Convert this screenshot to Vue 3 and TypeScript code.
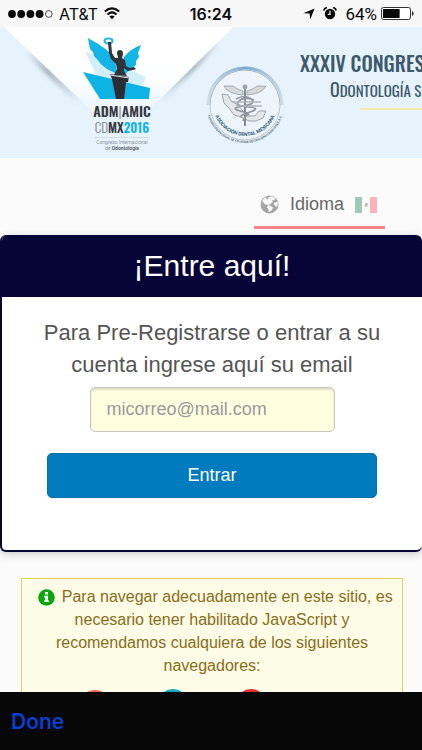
<script setup lang="ts">
import { ref } from 'vue'

const carrier = 'AT&T'
const time = '16:24'
const battery = 64
const signal = [true, true, true, true, false]
const email = ref('')
</script>

<template>
  <div class="screen">
    <header class="status">
      <div class="status-left">
        <svg width="45" height="10" viewBox="0 0 45 10" aria-hidden="true">
          <circle
            v-for="(on, i) in signal"
            :key="i"
            :cx="4 + i * 9.2"
            cy="5"
            :r="on ? 3.9 : 3.4"
            :fill="on ? '#0a0a0a' : 'none'"
            :stroke="on ? 'none' : '#222'"
            stroke-width=".8"
          />
        </svg>
        <span>{{ carrier }}</span>
        <svg width="16" height="13" viewBox="0 0 16 13" fill="none" stroke="#0a0a0a" stroke-width="2" aria-hidden="true">
          <path d="M.8 4.6Q8-1.8 15.2 4.6" />
          <path d="M3.5 7.4Q8 3.4 12.5 7.4" />
          <path d="M8 12.2 5.4 9.5Q8 7.3 10.6 9.5Z" fill="#0a0a0a" stroke="none" />
        </svg>
      </div>
      <strong class="time">{{ time }}</strong>
      <div class="status-right">
        <svg width="12" height="12" viewBox="0 0 12 12" aria-hidden="true">
          <path d="M11.6.4 7.2 11.4 6.6 5.6.4 5.2Z" fill="#0a0a0a" />
        </svg>
        <svg class="alarm" width="14" height="13" viewBox="0 0 14 13" aria-hidden="true">
          <circle cx="7" cy="7" r="5.2" fill="#0a0a0a" />
          <path d="M.9 3.6Q1.2 1 4 .8M13.1 3.6Q12.8 1 10 .8" fill="none" stroke="#0a0a0a" stroke-width="1.6" />
          <path d="M7 3.8V7.4H4.8" fill="none" stroke="#fff" stroke-width="1.1" />
        </svg>
        <span class="percent">{{ battery }}%</span>
        <svg width="33" height="13" viewBox="0 0 33 13" aria-hidden="true">
          <rect x=".5" y=".5" width="29" height="12" rx="2" fill="#fff" stroke="#333" />
          <rect x="2" y="2" :width="26 * battery / 100" height="9" rx=".5" fill="#080808" />
          <path d="M31 4Q32.6 4.6 32.6 6.5T31 9Z" fill="#222" />
        </svg>
      </div>
    </header>

    <main class="page">
      <section class="banner">
        <svg class="fold" width="240" height="131" viewBox="0 0 240 131" aria-hidden="true">
          <defs>
            <linearGradient id="paper" x1="0" y1="0" x2="0" y2="1">
              <stop offset="0" stop-color="#fff" />
              <stop offset=".55" stop-color="#fdfeff" />
              <stop offset="1" stop-color="#e7f3fc" />
            </linearGradient>
            <linearGradient id="shadeLeft" gradientUnits="userSpaceOnUse" x1="26" y1="24" x2="80" y2="76">
              <stop offset="0" stop-color="#70808a" stop-opacity="0" />
              <stop offset=".4" stop-color="#70808a" stop-opacity=".65" />
              <stop offset="1" stop-color="#70808a" stop-opacity="0" />
            </linearGradient>
            <linearGradient id="shadeRight" gradientUnits="userSpaceOnUse" x1="220" y1="13" x2="160" y2="73">
              <stop offset="0" stop-color="#70808a" stop-opacity="0" />
              <stop offset=".45" stop-color="#70808a" stop-opacity=".6" />
              <stop offset="1" stop-color="#70808a" stop-opacity="0" />
            </linearGradient>
            <filter id="soften" x="-20%" y="-20%" width="140%" height="140%">
              <feGaussianBlur stdDeviation="2" />
            </filter>
          </defs>
          <path d="M14 12 80 76" stroke="url(#shadeLeft)" stroke-width="5" filter="url(#soften)" />
          <path d="M224 10 158 76" stroke="url(#shadeRight)" stroke-width="5" filter="url(#soften)" />
          <path d="M4 0H233L158 74Q119 112 82 74Z" fill="url(#paper)" />
        </svg>

        <div class="event">
          <svg width="70" height="64" viewBox="0 0 70 64" aria-hidden="true">
            <path d="M2 15 63 41 59 49 14 41Z" fill="#d3eefa" />
            <path d="M5 2Q16 8 24 14L30 21Q33 26 34 38L24 33 20 30 17 27 14 23 11 20 10 16 7 13 6 8Z" fill="#12b5e5" />
            <path d="M58 9Q47 13 41 21L40 31 42 38 48 33 53 29 53 25 56 21 55 17Z" fill="#12b5e5" />
            <path d="M0 36 67 52 66 63H17Z" fill="#0db3e5" />
            <ellipse cx="25.5" cy="5" rx="4" ry="2.4" fill="none" stroke="#25b9e2" stroke-width="2" />
            <path d="M25 6 28 6 29 17 32 22 35 22 34 17Q34 14 37 14 40 14 40 18L39 22 42 24 43 30 47 32 51 31 53 33 50 34 45 35 41 32 41 35 44 40 31 39 34 33 33 28 28 23 26 17Z" fill="#30343a" />
            <path d="M27 38 46 41 45 46 43 46 41 63H33L29 43Z" fill="#2b2d33" />
            <path d="M27 39 46 42" stroke="#d9e0e3" stroke-width="1.2" />
          </svg>
          <div class="event-text">
            <p class="event-name">ADM<span class="thin">|</span>AMIC</p>
            <p class="event-year"><span class="thin">CD</span>MX<span class="cyan">2016</span></p>
            <p class="event-note">Congreso Internacional<br />de <b>Odontología</b></p>
          </div>
        </div>

        <svg class="seal" width="80" height="80" viewBox="0 0 80 80" role="img" aria-label="Asociación Dental Mexicana">
          <defs>
            <linearGradient id="rim" x1="0" y1="0" x2="1" y2="0">
              <stop offset="0" stop-color="#cfdde6" />
              <stop offset=".5" stop-color="#7ba9cf" />
              <stop offset="1" stop-color="#ccdbe4" />
            </linearGradient>
            <path id="innerArc" d="M8 39A32 32 0 0 0 72 39" />
            <path id="outerArc" d="M1 39A39 39 0 0 0 79 39" />
          </defs>
          <circle cx="40" cy="40" r="34" fill="#eef5fa" />
          <path d="M3 40A37 37 0 0 1 77 40" fill="none" stroke="url(#rim)" stroke-width="3" />
          <path d="M5 40A35 35 0 0 1 75 40" fill="none" stroke="#93a7b5" stroke-width=".8" />
          <path d="M5 40A35 35 0 0 0 75 40" fill="none" stroke="#b3bec6" stroke-width=".8" />
          <path d="M17 29 23 30 26 36 33 40 37 45 43 51 50 51 54 46 61 46 58 53 51 56 44 56 36 52 29 50 24 43 19 38Z" fill="#e3e7ea" stroke="#9ca4ab" stroke-width="1" />
          <path d="M38 26Q31 24 28 21L19 21Q23 29 38 30ZM42 26Q49 24 52 21L61 21Q57 29 42 30Z" fill="#d5d9dc" stroke="#969ea5" stroke-width=".8" />
          <path d="M40 21V61" stroke="#838a91" stroke-width="2" />
          <circle cx="40" cy="22" r="2.4" fill="#9da3a9" />
          <path d="M31 34Q40 29 46 34T38 41 35 46 43 50 38 56M49 35Q39 31 34 36T43 42 45 47 37 52" fill="none" stroke="#90979e" stroke-width="1.7" />
          <path d="M27 37H56M31 41H57" stroke="#b0b6ba" stroke-width="1.5" />
          <text class="seal-inner"><textPath href="#innerArc" startOffset="50%" text-anchor="middle">ASOCIACIÓN DENTAL MEXICANA</textPath></text>
          <text class="seal-outer"><textPath href="#outerArc" startOffset="50%" text-anchor="middle">FEDERACIÓN NACIONAL DE COLEGIOS DE CIRUJANOS DENTISTAS, A.C.</textPath></text>
        </svg>

        <div class="congress">
          <h1>XXXIV CONGRESO</h1>
          <p>O<small>DONTOLOGÍA SIN</small></p>
          <hr />
        </div>
      </section>

      <nav class="language-row">
        <a class="language" href="#idioma">
          <svg width="19" height="19" viewBox="0 0 19 19" aria-hidden="true">
            <circle cx="9.5" cy="9.5" r="9" fill="#a5a5a5" />
            <path d="M9 2 12 1.4 15.5 3.6 14 5.2 12.2 5 12.8 7 11 8.6 9.2 9.4 9.6 11 8 10.6 6.8 9.6 5 9.4 3 7 2.4 5.6 4.2 3.2 6.2 2.6 6.8 4.4 8.2 4Z" fill="#f8f8f8" />
            <path d="M7.8 10.8 10.6 10.8 13 12.6 12 15 9.8 16.8 8.8 16.8 8.2 13.8 6.8 12.2ZM14.4 7.4 17.4 6.8 17.8 10 16.4 12 15 10.8 13.8 9.2Z" fill="#f8f8f8" />
          </svg>
          <span>Idioma</span>
          <svg width="22" height="16" viewBox="0 0 22 16" role="img" aria-label="México">
            <rect width="22" height="16" fill="#fcfcfc" />
            <rect width="7" height="16" fill="#9ccbbc" />
            <rect x="15" width="7" height="16" fill="#ffb2b8" />
            <path d="M9.5 8.5Q9.5 6 12 5.5L13 7 12.4 9.6 10.5 10.2Z" fill="#c4bda9" />
          </svg>
        </a>
      </nav>

      <form class="card" @submit.prevent>
        <h2>¡Entre aquí!</h2>
        <div class="card-body">
          <label for="email">Para Pre-Registrarse o entrar a su cuenta ingrese aquí su email</label>
          <input id="email" v-model="email" type="email" placeholder="micorreo@mail.com" />
          <button type="submit">Entrar</button>
        </div>
      </form>

      <aside class="notice">
        <p>
          <svg class="info" width="17" height="17" viewBox="0 0 17 17" aria-hidden="true">
            <circle cx="8.5" cy="8.5" r="8.3" fill="#0aa50f" />
            <path d="M7 3H10V5.4H7ZM6 6.8H10V11.6H11V13H6V11.6H7.2V8.2H6Z" fill="#fff" />
          </svg>
          Para navegar adecuadamente en este sitio, es necesario tener habilitado JavaScript y recomendamos cualquiera de los siguientes navegadores:
        </p>
        <div class="browsers">
          <svg width="32" height="32" viewBox="0 0 32 32" aria-hidden="true">
            <circle cx="16" cy="17" r="16" fill="#ee6044" />
          </svg>
          <svg width="32" height="32" viewBox="0 0 32 32" aria-hidden="true">
            <circle cx="16" cy="16" r="14" fill="#dff4f5" stroke="#16aabd" stroke-width="4" />
          </svg>
          <svg width="32" height="32" viewBox="0 0 32 32" aria-hidden="true">
            <circle cx="16" cy="16" r="16" fill="#e52f31" />
          </svg>
          <svg width="32" height="32" viewBox="0 0 32 32" aria-hidden="true" />
        </div>
      </aside>
    </main>

    <footer class="toolbar">
      <button type="button">Done</button>
    </footer>
  </div>
</template>

<style>
body {
  background: #fbfbfb;
}
</style>

<style scoped>
* {
  box-sizing: border-box;
}

.screen {
  display: flex;
  flex-direction: column;
  height: 100vh;
  overflow: hidden;
  background: #fbfbfb;
  font-family: "Liberation Sans", Arial, sans-serif;
}

.status {
  display: grid;
  grid-template-columns: 1fr auto 1fr;
  align-items: center;
  flex: none;
  height: 27px;
  padding: 0 8px;
  background: #f7f7f7;
  color: #0a0a0a;
  font-family: Inter, Roboto, sans-serif;
  font-size: 16px;
}

.status-left,
.status-right {
  display: flex;
  align-items: center;
  gap: 6px;
}

.status-right {
  justify-content: flex-end;
  gap: 4px;
}

.alarm {
  margin: 0 4px;
}

.percent {
  font-family: Roboto, sans-serif;
  font-size: 17px;
}

.time {
  font-weight: 600;
}

.page {
  flex: 1;
  min-height: 0;
  overflow: hidden;
}

.banner {
  position: relative;
  display: flex;
  height: 131px;
  overflow: hidden;
  background: #e7f3fc;
}

.fold {
  position: absolute;
  top: 0;
  left: 0;
}

.event {
  position: relative;
  flex: none;
  width: 78px;
  margin: 9px 0 0 83px;
  font-family: Oswald, "Liberation Sans Narrow", "DejaVu Sans Condensed", sans-serif;
}

.event > svg {
  display: block;
}

.event-text {
  text-align: center;
}

.event p {
  margin: 0;
  white-space: nowrap;
}

.event .event-name {
  margin-top: 2px;
}

.event-name,
.event-year {
  color: #363a42;
  font-weight: 600;
  line-height: 17px;
}

.event-name {
  font-size: 14px;
}

.event-year {
  font-size: 13px;
}

.thin {
  color: #7b8188;
  font-weight: 300;
}

.cyan {
  color: #0fb3e3;
}

.event-note {
  border-top: 1px solid #cfdae2;
  color: #8a959d;
  font-family: Roboto, sans-serif;
  font-size: 5px;
  line-height: 6px;
}

.event .event-note {
  margin: 1px 12px 0;
  padding-top: 1px;
}

.event-note b {
  color: #59626a;
}

.seal {
  position: relative;
  flex: none;
  margin: 38px 0 0 44px;
  font-family: Roboto, sans-serif;
  font-weight: 700;
}

.seal-inner {
  fill: #315974;
  font-size: 5px;
}

.seal-outer {
  fill: #566b7a;
  font-size: 3px;
}

.congress {
  display: flex;
  flex: none;
  flex-direction: column;
  width: 240px;
  margin: 23px 0 0 15px;
  color: #3c5a6b;
  font-family: Oswald, "Liberation Sans Narrow", "DejaVu Sans Condensed", sans-serif;
  font-weight: 500;
  white-space: nowrap;
}

.congress h1 {
  margin: 0;
  font-size: 20px;
  font-weight: 500;
  line-height: 26px;
}

.congress p {
  margin: 2px 0 0 30px;
  font-size: 18px;
  font-weight: 400;
  line-height: 22px;
}

.congress small {
  font-size: 15px;
}

.congress hr {
  width: 120px;
  height: 2px;
  margin: 7px 0 0 60px;
  border: 0;
  background: #f6e8a9;
}

.language-row {
  display: flex;
  justify-content: flex-end;
  padding: 25px 37px 0 0;
}

.language {
  display: flex;
  align-items: center;
  height: 46px;
  padding: 0 8px 0 6px;
  border-bottom: 3px solid #f4838a;
  color: #686868;
  font-size: 18px;
  text-decoration: none;
}

.language span {
  margin: 0 11px 0 11px;
}

.card {
  margin-top: 6px;
  overflow: hidden;
  border: solid #070438;
  border-width: 0 0 2px 2px;
  border-radius: 6px;
  background: #fff;
  box-shadow: 0 2px 8px #0003;
}

.card h2 {
  margin: 0;
  background: #070438;
  color: #fff;
  font-size: 30px;
  font-weight: 400;
  line-height: 62px;
  text-align: center;
}

.card-body {
  display: flex;
  flex-direction: column;
  align-items: center;
  padding: 20px 45px 52px;
}

.card-body label {
  margin: 0 -10px;
  color: #555;
  font-size: 22px;
  line-height: 32px;
  text-align: center;
}

.card-body input {
  width: 245px;
  height: 45px;
  margin-top: 6px;
  padding: 0 16px;
  border: 1px solid #c7c7bc;
  border-radius: 5px;
  background: #ffffe0;
  box-shadow: inset 0 2px 2px #0002;
  color: #555;
  font: 18px "Liberation Sans", Arial, sans-serif;
}

.card-body input::placeholder {
  color: #999;
  opacity: 1;
}

.card-body button {
  align-self: stretch;
  height: 45px;
  margin-top: 21px;
  border: 1px solid #0870a8;
  border-radius: 5px;
  background: #007bbd;
  color: #fff;
  font: 18px "Liberation Sans", Arial, sans-serif;
}

.notice {
  margin: 26px 19px 0 21px;
  padding: 6px 8px;
  border: 1px solid #ded65a;
  background: #fdfce6;
  color: #8a6d1b;
  font-size: 16px;
  line-height: 23px;
  text-align: center;
}

.notice p {
  margin: 0;
}

.info {
  margin: 0 2px 0 7px;
  vertical-align: -4px;
}

.browsers {
  display: flex;
  justify-content: center;
  gap: 46px;
  margin-top: 12px;
}

.toolbar {
  display: flex;
  flex: none;
  align-items: center;
  height: 58px;
  padding: 0 11px;
  background: #070707;
}

.toolbar button {
  padding: 0;
  border: 0;
  background: none;
  color: #073fd0;
  font: 600 21px Inter, Roboto, sans-serif;
}
</style>
